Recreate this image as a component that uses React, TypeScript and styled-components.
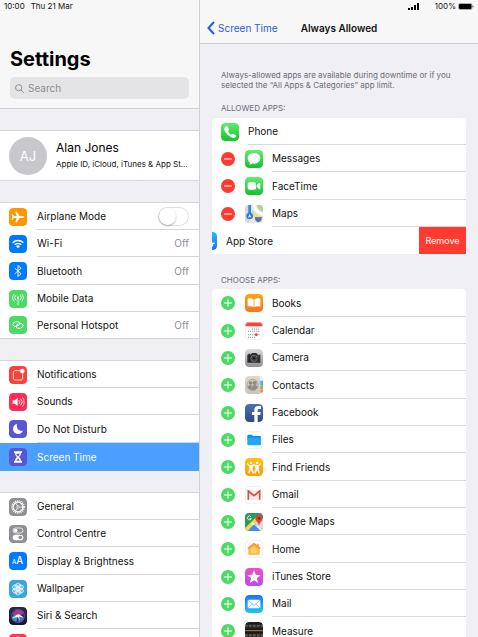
import React, { useState } from "react";
import styled, { createGlobalStyle, css } from "styled-components";

const GlobalStyle = createGlobalStyle`
  *, *::before, *::after { box-sizing: border-box; }
  body {
    margin: 0;
    background: #efeff4;
    color: #111;
    font-family: Inter, "Liberation Sans", sans-serif;
    font-size: 10px;
  }
  h1, h2, h3, p, ul { margin: 0; padding: 0; }
  ul { list-style: none; }
  a { color: inherit; text-decoration: none; }
  button, input { font: inherit; color: inherit; margin: 0; }
`;

/* ---------- icons ---------- */

const Svg = styled.svg`
  display: block;
  flex: none;
  width: 18px;
  height: 18px;
  border-radius: 4px;
`;

const flat: Record<string, string> = {
  airplane: "#ff9500",
  wifi: "#007aff",
  bluetooth: "#007aff",
  mobile: "#4cd964",
  hotspot: "#4cd964",
  notifications: "#f9423a",
  sounds: "#ff2d55",
  dnd: "#5856d6",
  screentime: "#5856d6",
  general: "#8e8e93",
  control: "#8e8e93",
  display: "#007aff",
  wallpaper: "#39a5dc",
  touch: "#ff3350",
};

const gradients: Record<string, [string, string]> = {
  siri: ["#2b2a55", "#15152a"],
  phone: ["#5fee6f", "#12c42c"],
  messages: ["#62ef70", "#14bf2d"],
  facetime: ["#62ef70", "#14bf2d"],
  appstore: ["#1fc0fa", "#1b6ff0"],
  books: ["#ffa50a", "#fb7420"],
  camera: ["#dcdce0", "#909095"],
  contacts: ["#dedad0", "#c8c4ba"],
  facebook: ["#4c70b5", "#2f4a87"],
  friends: ["#ffc113", "#ff9a07"],
  itunes: ["#ee50c0", "#bb4af0"],
  mail: ["#1e72f0", "#1cc6fb"],
  measure: ["#1c1c1e", "#1c1c1e"],
};

const line = { fill: "none", stroke: "#fff", strokeLinecap: "round" as const, strokeLinejoin: "round" as const };

const drawings: Record<string, React.ReactNode> = {
  airplane: (
    <path fill="#fff" d="M46 27c0-2-3-3-6-3h-8L23 11h-4l4 13h-8l-4-5H8l2 8-2 8h3l4-5h8l-4 13h4l9-13h8c3 0 6-1 6-3z" />
  ),
  wifi: (
    <g {...line} strokeWidth="4.2" strokeLinecap="butt">
      <path d="M11 23a23 23 0 0 1 32 0" />
      <path d="M17 29.500a14 14 0 0 1 20 0" />
      <path fill="#fff" stroke="none" d="M27 40l-6-6.500a9 9 0 0 1 12 0z" />
    </g>
  ),
  bluetooth: <path {...line} strokeWidth="2.800" d="M18 19l18 16-9 9V10l9 9-18 16" />,
  mobile: (
    <g {...line} strokeWidth="2.600">
      <path d="M27 25v19" />
      <circle cx="27" cy="23" r="3.200" fill="#fff" stroke="none" />
      <path d="M20 30a10 10 0 0 1 0-14M34 30a10 10 0 0 0 0-14M15 33a15 15 0 0 1 0-20M39 33a15 15 0 0 0 0-20" />
    </g>
  ),
  hotspot: (
    <g {...line} strokeWidth="2.600">
      <ellipse cx="22" cy="24" rx="11" ry="7" transform="rotate(-14 22 24)" />
      <ellipse cx="32" cy="30" rx="11" ry="7" transform="rotate(-14 32 30)" />
    </g>
  ),
  notifications: (
    <g>
      <path {...line} strokeWidth="2.600" d="M32 14H18c-3 0-5 2-5 5v18c0 3 2 5 5 5h18c3 0 5-2 5-5V23" />
      <circle cx="40" cy="15" r="7" fill="#fff" />
    </g>
  ),
  sounds: (
    <g>
      <path fill="#fff" d="M11 22h6l9-7v24l-9-7h-6z" />
      <path {...line} strokeWidth="2.400" d="M31 22a8 8 0 0 1 0 10M36 18a14 14 0 0 1 0 18M41 14a20 20 0 0 1 0 26" />
    </g>
  ),
  dnd: <path fill="#fff" d="M24 11c-3 14 5 23 18 21-3 7-9 10-15 10a15 15 0 0 1-15-15c0-8 5-14 12-16z" />,
  screentime: (
    <g>
      <path fill="#fff" d="M15 10h24v5h-3c0 6-3 9-6 12 3 3 6 6 6 12h3v5H15v-5h3c0-6 3-9 6-12-3-3-6-6-6-12h-3z" />
      <path fill="#5856d6" d="M22 17h10c0 3-2 5-5 8-3-3-5-5-5-8zM27 31l5 7H22z" />
    </g>
  ),
  general: (
    <g fill="none" stroke="#fff">
      <circle cx="27" cy="27" r="18" strokeWidth="5" strokeDasharray="2.900 2.755" />
      <circle cx="27" cy="27" r="14.500" strokeWidth="3.400" />
      <circle cx="27" cy="27" r="3.500" strokeWidth="2" />
      <path strokeWidth="2.200" d="M30 27h11M25 24l-5-9M25 30l-5 9" />
    </g>
  ),
  control: (
    <g>
      <rect x="12" y="9" width="30" height="15" rx="7.500" fill="none" stroke="#fff" strokeWidth="2.400" />
      <circle cx="20" cy="16.500" r="5.500" fill="#fff" />
      <rect x="11" y="29" width="32" height="17" rx="8.500" fill="#fff" />
      <circle cx="34" cy="37.500" r="5.500" fill="#8e8e93" />
    </g>
  ),
  display: (
    <g fill="#fff" fontFamily="Inter, sans-serif" fontWeight="500">
      <text x="9" y="37" fontSize="18">A</text>
      <text x="22" y="37" fontSize="29">A</text>
    </g>
  ),
  wallpaper: (
    <g fill="#bfe7fb" fillOpacity="0.35" stroke="#fff" strokeWidth="1.800">
      {[0, 60, 120, 180, 240, 300].map((angle) => (
        <g key={angle} transform={`rotate(${angle} 27 27)`}>
          <ellipse cx="27" cy="16.500" rx="6.500" ry="7.500" />
          <ellipse cx="32" cy="18" rx="3" ry="5" transform="rotate(30 32 18)" />
        </g>
      ))}
      <circle cx="27" cy="27" r="4" />
    </g>
  ),
  siri: (
    <g>
      <circle cx="27" cy="27" r="20" fill="#392a67" />
      <path fill="#d43c94" d="M10 22c7-15 25-19 35-4L27 29z" opacity="0.75" />
      <path fill="#23bddd" d="M8 34c3-12 13-12 21-10L22 44c-7-1-12-4-14-10z" opacity="0.8" />
      <path fill="#477ff0" d="M29 25c10 0 15 5 16 10-5 9-12 11-18 11z" opacity="0.75" />
      <path fill="#fff" d="M10 33c7-2 11-9 18-11 5 0 9 7 16 9-7 1-11-2-14-2l3 14-6-13c-6-1-10 3-17 3z" />
      <circle cx="27" cy="27" r="20" fill="none" stroke="#7774ba" strokeWidth="1.500" />
    </g>
  ),
  touch: <circle cx="27" cy="27" r="17" fill="none" stroke="#fff" strokeWidth="5" />,
  phone: (
    <path
      fill="#fff"
      d="M18 10c2-1 3 0 4 2l4 7c1 2 0 3-2 5-1 1-1 2 0 4 2 3 4 5 7 7 2 1 3 1 4 0 2-2 3-2 5-1l6 4c2 1 2 3 1 4-4 5-9 5-14 2C24 39 17 32 13 25c-3-6-2-11 5-15z"
      transform="translate(-2 -1)"
    />
  ),
  messages: <path fill="#fff" d="M27 9c11 0 19 7 19 16s-8 16-19 16c-2 0-4 0-6-1-2 3-6 4-9 4 2-2 3-4 3-6C11 35 8 30 8 25 8 16 16 9 27 9z" />,
  facetime: (
    <g fill="#fff">
      <rect x="8" y="16" width="25" height="22" rx="5" />
      <path d="M35 24l8-7c1-1 3 0 3 1v18c0 1-2 2-3 1l-8-7z" />
    </g>
  ),
  maps: (
    <g>
      <path fill="#ece7d8" d="M0 0h54v54H0z" />
      <path fill="#d8d8d6" d="M0 0h12v54H0z" />
      <path fill="#a9d98c" d="M36 0h18v20C43 18 37 10 36 0z" />
      <path fill="#c7e5a8" d="M22 8c2 16 12 24 32 27v5H42L22 26z" />
      <path fill="#fff" d="M24 0h9c0 12 9 20 21 24v7C36 27 25 16 24 0z" />
      <path fill="#f8d980" d="M22 26l32 22v4h-8L22 34z" />
      <path fill="#2f83ea" d="M10 0h8v30h-8z" />
      <circle cx="14" cy="33" r="10" fill="#2479e4" />
      <path fill="#fff" d="M14 26l5 12-5-3-5 3z" />
      <path fill="#3f77c7" d="M31 36c6 2 12 2 18 0 3 9-2 13-9 16-7-3-12-7-9-16z" />
      <path fill="#e0484d" d="M31 36c6 2 12 2 18 0l1 4H30z" />
    </g>
  ),
  appstore: <path {...line} strokeWidth="5" d="M30 11L16 37M24 11l16 30M9 34h36" />,
  books: (
    <g fill="#fff">
      <path d="M26 17c-5-5-12-5-18-3v24c6-2 13-2 18 2zM28 17c5-5 12-5 18-3v24c-6-2-13-2-18 2z" />
    </g>
  ),
  calendar: (
    <g>
      <path fill="#fff" d="M0 0h54v54H0z" />
      <path fill="#f9423a" d="M0 0h54v13H0z" />
      <g stroke="#77777b" strokeWidth="2.600" strokeDasharray="3 3.200">
        <path d="M21 21h25M9 28h37M9 38h21M9 46h25" />
      </g>
      <path stroke="#77777b" strokeWidth="2.600" strokeDasharray="3 3.200" d="M40 38h6" />
      <circle cx="34" cy="38" r="4" fill="#ff2d2d" />
    </g>
  ),
  camera: (
    <g>
      <path fill="#2c2c2e" d="M8 17h9l4-5h13l4 5h8v24H7V17zM10 14h6v3h-6z" />
      <circle cx="27" cy="28" r="9.500" fill="none" stroke="#a8a8aa" strokeWidth="1.600" />
      <circle cx="27" cy="28" r="5" fill="#171719" stroke="#606064" strokeWidth="2" />
      <circle cx="39" cy="21" r="1.800" fill="#f5b83b" />
    </g>
  ),
  contacts: (
    <g>
      <path fill="#f1f0ec" d="M45 0h9v54h-9z" />
      <path fill="#55a9dc" d="M46 14h8v13h-8z" />
      <path fill="#75bd4f" d="M46 28h8v11h-8z" />
      <path fill="#ee8c32" d="M46 40h8v10h-8z" />
      <circle cx="23" cy="27" r="17" fill="#c9c6be" stroke="#9a978f" strokeWidth="1.800" />
      <g fill="#918d86">
        <circle cx="17" cy="21" r="5.500" />
        <circle cx="29" cy="21" r="6" />
        <path d="M8 34c2-6 6-8 10-8 3 2 3 10 2 16-6-1-10-3-12-8zM21 43c-1-9 1-16 8-16 5 0 8 3 9 7-3 6-9 9-17 9z" />
      </g>
    </g>
  ),
  facebook: <path fill="#fff" d="M28 54V33h-7v-9h7v-6c0-8 5-12 12-12h8v9h-5c-5 0-5 2-5 5v4h9l-1 9h-8v21z" />,
  files: (
    <g>
      <path fill="#fff" d="M0 0h54v54H0z" />
      <path fill="#168ce8" d="M7 14c0-2 1-3 3-3h10l4 4h20c2 0 4 1 4 3v8H7z" />
      <path fill="#22a8fa" d="M7 20h41v20c0 2-1 3-3 3H10c-2 0-3-1-3-3z" />
    </g>
  ),
  friends: (
    <g fill="#fff">
      <circle cx="18" cy="15" r="4" />
      <circle cx="36" cy="15" r="4" />
      <path d="M8 15l6 6h8l5-4 5 4h8l6-6 2 3-7 8v7l4 12-4 2-5-12-5 12-4-2 4-12v-7l-4-3-4 3v7l4 12-4 2-5-12-5 12-4-2 4-12v-7l-7-8z" />
    </g>
  ),
  gmail: (
    <g>
      <path fill="#fff" d="M0 0h54v54H0z" />
      <path fill="#ececec" d="M8 13h38v28H8z" />
      <path fill="none" stroke="#dc4a40" strokeWidth="5" d="M10 41V15l17 14 17-14v26" />
    </g>
  ),
  gmaps: (
    <g>
      <path fill="#269b5b" d="M0 0h54v54H0z" />
      <path fill="#dddcd8" d="M29 27l25-12v39H43z" />
      <path fill="#f9d64e" d="M0 45l36-35 10 9L11 54H0z" />
      <path fill="#fff" d="M23 28l31 26H43L19 32z" />
      <path fill="#458bf2" d="M27 34l21 20H8z" />
      <path fill="#dd463e" d="M42 5c7 0 11 5 11 11 0 9-9 11-11 23-2-12-11-14-11-23 0-6 4-11 11-11z" />
      <circle cx="42" cy="16" r="4" fill="#802720" />
      <path fill="none" stroke="#fff" strokeWidth="2.600" d="M18 11a6 6 0 1 0 1 6h-6" />
    </g>
  ),
  home: (
    <g>
      <path fill="#fff" d="M0 0h54v54H0z" />
      <path fill="#fdb544" d="M27 8l9 7v-4h6v9l5 4-3 3v17H10V27l-3-3z" />
      <path fill="#f99a2c" d="M27 8l20 16-3 3-17-13-17 13-3-3z" />
      <path fill="#ffd466" d="M27 20l10 8v11H17V28z" />
    </g>
  ),
  itunes: <path fill="#fff" d="M27 7l5.300 13.500L47 21.400 35.600 30.600 39.500 45 27 37 14.500 45l3.900-14.400L7 21.400l14.700-.9z" />,
  mail: (
    <g>
      <rect x="8" y="14" width="38" height="26" rx="3" fill="#fff" />
      <path {...line} stroke="#479bee" strokeWidth="1.800" d="M10 16l14 13c2 2 4 2 6 0l14-13M10 38l11-11M44 38L33 27" />
    </g>
  ),
  measure: (
    <g stroke="#a3a3a7" strokeWidth="5" strokeDasharray="1.500 2.500">
      <path d="M0 11h54M0 41h54" />
      <path stroke="#77777c" strokeWidth="3" d="M0 15h54M0 37h54" />
      <path stroke="#e3b338" strokeWidth="2.200" strokeDasharray="none" d="M0 26h54" />
    </g>
  ),
};

const framed = ["calendar", "files", "gmail", "home"];

function AppIcon({ name }: { name: string }) {
  const gradient = gradients[name];
  return (
    <Svg viewBox="0 0 54 54" aria-hidden="true">
      {gradient && (
        <defs>
          <linearGradient id={`fill-${name}`} x1="0" y1="0" x2="0" y2="1">
            <stop offset="0" stopColor={gradient[0]} />
            <stop offset="1" stopColor={gradient[1]} />
          </linearGradient>
        </defs>
      )}
      {gradient && <rect width="54" height="54" rx="12" fill={`url(#fill-${name})`} />}
      {flat[name] && <rect width="54" height="54" rx="12" fill={flat[name]} />}
      {drawings[name]}
      {framed.includes(name) && (
        <rect x="1" y="1" width="52" height="52" rx="11" fill="none" stroke="#e7e7ea" strokeWidth="2" />
      )}
    </Svg>
  );
}

/* ---------- layout ---------- */

const Page = styled.div`
  display: grid;
  grid-template-columns: minmax(200px, 5fr) minmax(0, 7fr);
  height: 100vh;
  overflow: hidden;
`;

const Sidebar = styled.aside`
  min-width: 0;
  overflow: hidden;
  border-right: 1px solid #cfcfd4;
`;

const Detail = styled.main`
  min-width: 0;
  overflow: hidden;
`;

const StatusBar = styled.div<{ $end?: boolean }>`
  display: flex;
  align-items: center;
  justify-content: ${(p) => (p.$end ? "flex-end" : "flex-start")};
  height: 12px;
  padding: 0 4px;
  font-size: 8px;
`;

const Clock = styled.span`
  margin-right: 6px;
`;

const Signal = styled.svg`
  width: 11px;
  height: 7px;
  margin-right: 16px;
`;

const Battery = styled.svg`
  width: 16px;
  height: 7px;
  margin-left: 2px;
`;

const SidebarHeader = styled.header`
  background: #f7f7f7;
  border-bottom: 1px solid #d0d0d4;
  padding-bottom: 9px;
`;

const Title = styled.h1`
  padding: 34px 10px 5px;
  font-size: 20px;
  line-height: 26px;
  font-weight: 700;
  color: #000;
`;

const SearchBox = styled.label`
  display: flex;
  align-items: center;
  gap: 4px;
  height: 22px;
  margin: 0 10px;
  padding: 0 5px;
  border-radius: 5px;
  background: #e4e4e6;
  color: #8e8e93;
`;

const SearchGlyph = styled.svg`
  flex: none;
  width: 9px;
  height: 9px;
`;

const SearchInput = styled.input`
  flex: 1;
  min-width: 0;
  padding: 0;
  border: 0;
  outline: 0;
  background: none;
  &::placeholder { color: #8e8e93; opacity: 1; }
`;

const Profile = styled.a`
  display: flex;
  align-items: center;
  gap: 9px;
  height: 51px;
  margin: 21px 0;
  padding: 0 9px;
  background: #fff;
  border: solid #d5d5d9;
  border-width: 1px 0;
`;

const Avatar = styled.span`
  display: grid;
  place-items: center;
  flex: none;
  width: 38px;
  height: 38px;
  border-radius: 50%;
  background: #c7c7cc;
  color: #fff;
  font-size: 13px;
`;

const ProfileText = styled.span`
  display: grid;
  gap: 1px;
  min-width: 0;
`;

const ProfileName = styled.span`
  font-size: 12px;
  line-height: 16px;
  color: #000;
`;

const ProfileNote = styled.span`
  font-size: 8px;
  line-height: 14px;
  white-space: nowrap;
`;

const Group = styled.ul`
  margin-bottom: 21px;
  background: #fff;
  border-top: 1px solid #d5d5d9;
`;

const SettingItem = styled.li<{ $selected?: boolean }>`
  height: ${(p) => (p.$selected ? "28px" : "27px")};
  &:nth-child(3n) { height: 28px; }
  &:last-child { border-bottom: ${(p) => (p.$selected ? "0" : "1px solid #d5d5d9")}; }
  &:last-child > * > span { border-bottom: 0; }
`;

const rowBody = css<{ $selected?: boolean }>`
  display: flex;
  align-items: center;
  gap: 10px;
  height: 100%;
  padding-left: 9px;
  background: ${(p) => (p.$selected ? "#4a9fff" : "none")};
  color: ${(p) => (p.$selected ? "#fff" : "inherit")};
`;

const SettingLink = styled.a<{ $selected?: boolean }>`
  ${rowBody}
`;

const SettingToggle = styled.label<{ $selected?: boolean }>`
  ${rowBody}
`;

const RowLabel = styled.span`
  display: flex;
  flex: 1;
  align-items: center;
  justify-content: space-between;
  align-self: stretch;
  min-width: 0;
  padding-right: 10px;
  border-bottom: 1px solid #d5d5d9;
`;

const Value = styled.span`
  color: #8e8e93;
`;

const Switch = styled.input`
  appearance: none;
  display: flex;
  width: 31px;
  height: 19px;
  border: 1px solid #dedee0;
  border-radius: 10px;
  background: #fff;
  &::before {
    content: "";
    width: 17px;
    height: 17px;
    border-radius: 50%;
    background: #fff;
    box-shadow: 0 1px 2px rgba(0, 0, 0, 0.3);
  }
  &:checked { background: #4cd964; justify-content: flex-end; }
`;

const DetailHeader = styled.header`
  background: #f7f7f7;
  border-bottom: 1px solid #d0d0d4;
`;

const NavBar = styled.nav`
  display: grid;
  grid-template-columns: 1fr auto 1fr;
  align-items: center;
  height: 31px;
  padding: 0 7px;
`;

const BackLink = styled.a`
  display: flex;
  align-items: center;
  gap: 3px;
  color: #1f5fdb;
  white-space: nowrap;
`;

const BackGlyph = styled.svg`
  width: 8px;
  height: 14px;
`;

const NavTitle = styled.h2`
  font-size: 10px;
  font-weight: 600;
`;

const Content = styled.div`
  padding: 26px 12px 0;
`;

const Hint = styled.p`
  padding: 0 9px;
  font-size: 8px;
  line-height: 10px;
  color: #6d6d72;
`;

const SectionTitle = styled.h3<{ $first?: boolean }>`
  padding: ${(p) => (p.$first ? "13px 9px 4px" : "21px 9px 3px")};
  font-size: 8px;
  line-height: 11px;
  font-weight: 400;
  color: #6d6d72;
`;

const Card = styled.ul<{ $tall: string }>`
  overflow: hidden;
  border-radius: 4px 4px 0 0;
  background: #fff;
  > li:nth-child(${(p) => p.$tall}) { height: 28px; }
`;

const AppRow = styled.li<{ $swiped?: boolean }>`
  display: flex;
  align-items: center;
  height: 27px;
  padding-left: 9px;
  > svg { margin-left: ${(p) => (p.$swiped ? "-22px" : "0")}; }
`;

const AppName = styled.span<{ $last?: boolean }>`
  display: flex;
  flex: 1;
  align-items: center;
  align-self: stretch;
  margin-left: 9px;
  border-bottom: ${(p) => (p.$last ? "0" : "1px solid #d9d9dc")};
`;

const RoundButton = styled.button<{ $add?: boolean }>`
  display: grid;
  place-items: center;
  flex: none;
  width: 14px;
  height: 14px;
  margin-right: 10px;
  padding: 0;
  border: 0;
  border-radius: 50%;
  background: ${(p) => (p.$add ? "#4cd964" : "#ff3b30")};
`;

const RoundGlyph = styled.svg`
  width: 8px;
  height: 8px;
`;

const RemoveButton = styled.button`
  align-self: stretch;
  width: 47px;
  padding: 0;
  border: 0;
  background: #ff3b30;
  color: #fff;
  font-size: 9px;
`;

/* ---------- data ---------- */

type Setting = { icon: string; label: string; value?: string; toggle?: boolean; selected?: boolean };

const groups: Setting[][] = [
  [
    { icon: "airplane", label: "Airplane Mode", toggle: true },
    { icon: "wifi", label: "Wi-Fi", value: "Off" },
    { icon: "bluetooth", label: "Bluetooth", value: "Off" },
    { icon: "mobile", label: "Mobile Data" },
    { icon: "hotspot", label: "Personal Hotspot", value: "Off" },
  ],
  [
    { icon: "notifications", label: "Notifications" },
    { icon: "sounds", label: "Sounds" },
    { icon: "dnd", label: "Do Not Disturb" },
    { icon: "screentime", label: "Screen Time", selected: true },
  ],
  [
    { icon: "general", label: "General" },
    { icon: "control", label: "Control Centre" },
    { icon: "display", label: "Display & Brightness" },
    { icon: "wallpaper", label: "Wallpaper" },
    { icon: "siri", label: "Siri & Search" },
    { icon: "touch", label: "" },
  ],
];

const allowed = [
  { icon: "phone", label: "Phone", fixed: true },
  { icon: "messages", label: "Messages" },
  { icon: "facetime", label: "FaceTime" },
  { icon: "maps", label: "Maps" },
  { icon: "appstore", label: "App Store", swiped: true },
];

const choices = [
  { icon: "books", label: "Books" },
  { icon: "calendar", label: "Calendar" },
  { icon: "camera", label: "Camera" },
  { icon: "contacts", label: "Contacts" },
  { icon: "facebook", label: "Facebook" },
  { icon: "files", label: "Files" },
  { icon: "friends", label: "Find Friends" },
  { icon: "gmail", label: "Gmail" },
  { icon: "gmaps", label: "Google Maps" },
  { icon: "home", label: "Home" },
  { icon: "itunes", label: "iTunes Store" },
  { icon: "mail", label: "Mail" },
  { icon: "measure", label: "Measure" },
];

function SettingRow({ item }: { item: Setting }) {
  const [on, setOn] = useState(false);
  if (item.toggle) {
    return (
      <SettingItem>
        <SettingToggle>
          <AppIcon name={item.icon} />
          <RowLabel>
            {item.label}
            <Switch type="checkbox" role="switch" checked={on} onChange={() => setOn(!on)} />
          </RowLabel>
        </SettingToggle>
      </SettingItem>
    );
  }
  return (
    <SettingItem $selected={item.selected}>
      <SettingLink href="#" $selected={item.selected}>
        <AppIcon name={item.icon} />
        <RowLabel>
          {item.label}
          {item.value && <Value>{item.value}</Value>}
        </RowLabel>
      </SettingLink>
    </SettingItem>
  );
}

export default function App() {
  return (
    <>
      <GlobalStyle />
      <Page>
        <Sidebar>
          <SidebarHeader>
            <StatusBar>
              <Clock>10:00</Clock>
              <span>Thu 21 Mar</span>
            </StatusBar>
            <Title>Settings</Title>
            <SearchBox>
              <SearchGlyph viewBox="0 0 9 9" fill="none" stroke="#8e8e93" aria-hidden="true">
                <circle cx="3.700" cy="3.700" r="3.100" />
                <path d="M6 6l2.600 2.600" />
              </SearchGlyph>
              <SearchInput type="text" placeholder="Search" aria-label="Search" />
            </SearchBox>
          </SidebarHeader>
          <Profile href="#">
            <Avatar>AJ</Avatar>
            <ProfileText>
              <ProfileName>Alan Jones</ProfileName>
              <ProfileNote>Apple ID, iCloud, iTunes &amp; App St…</ProfileNote>
            </ProfileText>
          </Profile>
          {groups.map((items, i) => (
            <Group key={i}>
              {items.map((item) => (
                <SettingRow key={item.icon} item={item} />
              ))}
            </Group>
          ))}
        </Sidebar>

        <Detail>
          <DetailHeader>
            <StatusBar $end>
              <Signal viewBox="0 0 11 7" aria-label="Signal">
                <path d="M0 5h2v2H0zM3 4h2v3H3zM6 2h2v5H6zM9 0h2v7H9z" />
              </Signal>
              <span>100%</span>
              <Battery viewBox="0 0 16 7" aria-label="Battery">
                <rect x="0.500" y="0.500" width="13.500" height="6" rx="1.500" fill="none" stroke="#888" strokeWidth="0.700" />
                <rect x="1" y="1" width="12.500" height="5" rx="1" />
                <path d="M14.800 2.500c1 .3 1 1.700 0 2z" />
              </Battery>
            </StatusBar>
            <NavBar>
              <BackLink href="#">
                <BackGlyph viewBox="0 0 8 14" fill="none" stroke="currentColor" strokeWidth="2" aria-hidden="true">
                  <path d="M7 1L1.500 7 7 13" />
                </BackGlyph>
                Screen Time
              </BackLink>
              <NavTitle>Always Allowed</NavTitle>
            </NavBar>
          </DetailHeader>
          <Content>
            <Hint>
              Always-allowed apps are available during downtime or if you selected the “All Apps &amp; Categories” app
              limit.
            </Hint>
            <SectionTitle $first>ALLOWED APPS:</SectionTitle>
            <Card $tall="3n">
              {allowed.map((app) => (
                <AppRow key={app.icon} $swiped={app.swiped}>
                  {!app.fixed && !app.swiped && (
                    <RoundButton aria-label={`Remove ${app.label}`}>
                      <RoundGlyph viewBox="0 0 8 8" stroke="#fff">
                        <path d="M0 4h8" />
                      </RoundGlyph>
                    </RoundButton>
                  )}
                  <AppIcon name={app.icon} />
                  <AppName $last={app.swiped}>{app.label}</AppName>
                  {app.swiped && <RemoveButton>Remove</RemoveButton>}
                </AppRow>
              ))}
            </Card>
            <SectionTitle>CHOOSE APPS:</SectionTitle>
            <Card $tall="3n+1">
              {choices.map((app) => (
                <AppRow key={app.icon}>
                  <RoundButton $add aria-label={`Add ${app.label}`}>
                    <RoundGlyph viewBox="0 0 8 8" stroke="#fff">
                      <path d="M0 4h8M4 0v8" />
                    </RoundGlyph>
                  </RoundButton>
                  <AppIcon name={app.icon} />
                  <AppName>{app.label}</AppName>
                </AppRow>
              ))}
            </Card>
          </Content>
        </Detail>
      </Page>
    </>
  );
}
